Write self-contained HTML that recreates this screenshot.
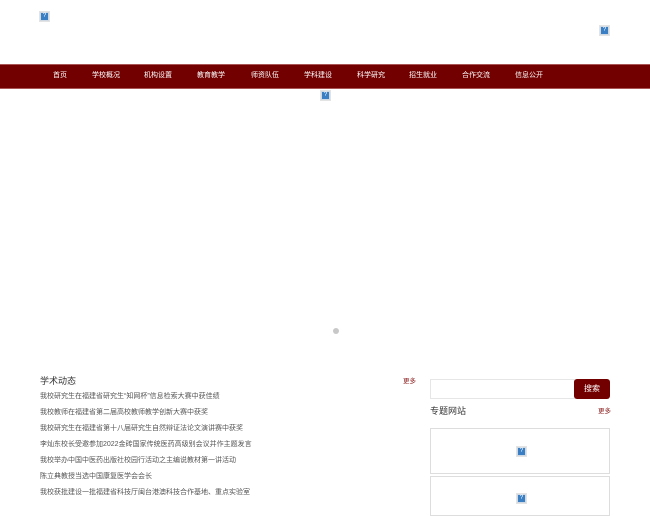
<!DOCTYPE html>
<html><head><meta charset="utf-8"><style>
*{margin:0;padding:0;box-sizing:border-box}
body{width:650px;height:500px;overflow:hidden;background:#fff;font-family:"Liberation Sans","Noto Sans CJK SC",sans-serif;position:relative}
.ic{position:absolute;width:9px;height:9px;background:#3a7fc4;border:1px solid #cfd9e4;outline:1px solid #e3e3e3;color:#fff;font-size:6px;line-height:7px;text-align:center}
.nav{position:absolute;top:64px;left:0;width:650px;height:25px;background:#730000;border-top:1px solid #a55;border-bottom:1px solid #a55}
.nav span{position:absolute;top:6px;font-size:7px;line-height:10px;color:#fff;white-space:nowrap}
.dot{position:absolute;left:333px;top:328px;width:6px;height:6px;border-radius:50%;background:#c8c8c8}
h3{position:absolute;font-weight:normal;font-size:9px;color:#333}
.more{position:absolute;font-size:6.5px;color:#8a1a1a}
.list{position:absolute;left:40px;top:392px}
.list div{font-size:7px;color:#555;height:16px;line-height:10px;white-space:nowrap}
.search{position:absolute;left:430px;top:379px;width:145px;height:20px;border:1px solid #e6e6e6}
.btn{position:absolute;left:574px;top:379px;width:36px;height:20px;background:#730000;border-radius:3px;color:#fff;font-size:8px;text-align:center;line-height:20px}
.box{position:absolute;left:430px;width:180px;border:1px solid #ddd}
</style></head><body>
<div class="ic" style="left:40px;top:12px">?</div>
<div class="ic" style="left:600px;top:26px">?</div>
<div class="nav">
<span style="left:53px">首页</span>
<span style="left:92px">学校概况</span>
<span style="left:144px">机构设置</span>
<span style="left:197px">教育教学</span>
<span style="left:251px">师资队伍</span>
<span style="left:304px">学科建设</span>
<span style="left:357px">科学研究</span>
<span style="left:409px">招生就业</span>
<span style="left:462px">合作交流</span>
<span style="left:515px">信息公开</span>
</div>
<div class="ic" style="left:321px;top:91px">?</div>
<div class="dot"></div>
<h3 style="left:40px;top:374px">学术动态</h3>
<div class="more" style="left:403px;top:375px">更多</div>
<div class="list">
<div>我校研究生在福建省研究生“知网杯”信息检索大赛中获佳绩</div>
<div>我校教师在福建省第二届高校教师教学创新大赛中获奖</div>
<div>我校研究生在福建省第十八届研究生自然辩证法论文演讲赛中获奖</div>
<div>李灿东校长受邀参加2022金砖国家传统医药高级别会议并作主题发言</div>
<div>我校举办中国中医药出版社校园行活动之主编说教材第一讲活动</div>
<div>陈立典教授当选中国康复医学会会长</div>
<div>我校获批建设一批福建省科技厅闽台港澳科技合作基地、重点实验室</div>
</div>
<div class="search"></div>
<div class="btn">搜索</div>
<h3 style="left:430px;top:404px">专题网站</h3>
<div class="more" style="left:598px;top:405px">更多</div>
<div class="box" style="top:428px;height:46px"><div class="ic" style="left:86px;top:18px">?</div></div>
<div class="box" style="top:476px;height:40px"><div class="ic" style="left:86px;top:17px">?</div></div>
</body></html>
